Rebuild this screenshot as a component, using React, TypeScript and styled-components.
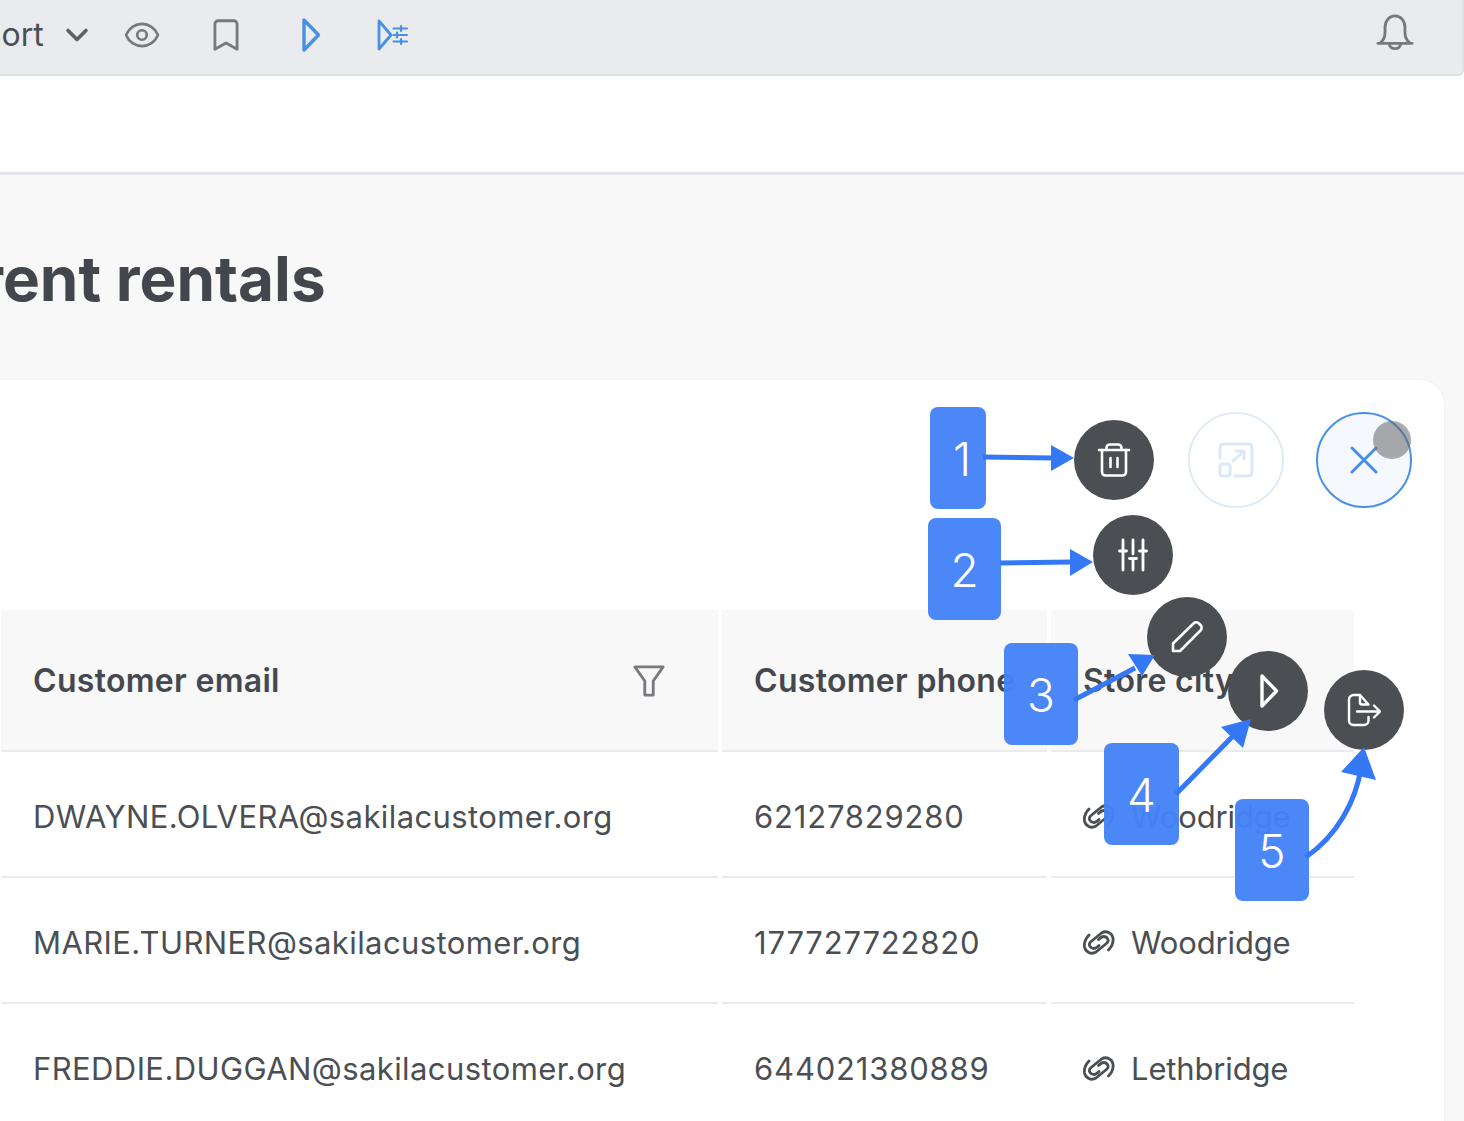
import React from "react";
import styled, { createGlobalStyle } from "styled-components";
import { Bookmark, ChevronDown, Eye } from "lucide-react";

const GlobalStyle = createGlobalStyle`
  html, body {
    margin: 0;
    padding: 0;
    background: #ffffff;
  }
  body {
    font-family: Inter, "Liberation Sans", sans-serif;
    color: #45494f;
  }
`;

const Page = styled("div")`
  position: relative;
  width: 1464px;
  height: 1121px;
  overflow: hidden;
  display: flex;
  flex-direction: column;
  background: #ffffff;
`;

const TopBar = styled("div")`
  height: 76px;
  box-sizing: border-box;
  display: flex;
  align-items: center;
  padding: 0 25px 5px 0;
  background: #e9ebef;
  border-bottom: 2px solid #dfe1e6;
  border-right: 2px solid #dfe1e6;
  border-bottom-right-radius: 6px;
`;

const SortLabel = styled("span")`
  margin-left: -19px;
  flex: 0 0 63px;
  font-size: 32px;
  line-height: 36px;
  color: #4b4f54;
`;

const Chevron = styled(ChevronDown)`
  flex: 0 0 36px;
  width: 36px;
  height: 36px;
  margin-left: 15px;
  margin-right: 5px;
  color: #5d6065;
`;

const IconSlot = styled("div")<{ $tone?: "grey" | "blue" }>`
  flex: 0 0 84px;
  height: 40px;
  display: flex;
  align-items: center;
  justify-content: center;
  color: ${(p) => (p.$tone === "blue" ? "#4a90e2" : "#77797d")};
`;

const BellSlot = styled(IconSlot)`
  box-sizing: border-box;
  margin-left: auto;
  padding-bottom: 5px;
`;

const SubBar = styled("div")`
  height: 96px;
  flex-shrink: 0;
  background: #ffffff;
  border-bottom: 3px solid #e4e6eb;
`;

const Content = styled("div")`
  flex: 1;
  min-height: 0;
  display: flex;
  flex-direction: column;
  background: #f8f8f9;
`;

const Title = styled("h1")`
  margin: 68px 0 0 -131px;
  font-size: 62px;
  line-height: 72px;
  font-weight: 700;
  color: #43474d;
  white-space: nowrap;
`;

const Card = styled("div")`
  flex: 1;
  margin: 65px 20px 0 -24px;
  padding: 230px 0 0 25px;
  background: #ffffff;
  border-radius: 24px 24px 0 0;
  box-shadow: 0 0 2px rgba(60, 64, 70, 0.1);
`;

const TableGrid = styled("div")`
  display: grid;
  grid-template-columns: 717px 325px 303px;
  column-gap: 4px;
`;

const HeadCell = styled("div")`
  height: 142px;
  box-sizing: border-box;
  display: flex;
  align-items: center;
  justify-content: space-between;
  padding: 1px 53px 0 32px;
  background: #f8f8f9;
  border-bottom: 2px solid #ebebef;
  font-size: 32px;
  font-weight: 600;
  letter-spacing: 0.3px;
  color: #45494f;
  white-space: nowrap;
`;

const BodyCell = styled("div")<{ $tracking: number }>`
  height: 126px;
  box-sizing: border-box;
  display: flex;
  align-items: center;
  gap: 16px;
  padding: 5px 0 0 32px;
  border-bottom: 2px solid #ebebef;
  font-size: 31px;
  letter-spacing: ${(p) => p.$tracking}px;
  color: #4b4f54;
  white-space: nowrap;
`;

const Marker = styled("div")<{ $x: number; $y: number; $w: number; $inset?: number }>`
  position: absolute;
  left: ${(p) => p.$x}px;
  top: ${(p) => p.$y}px;
  width: ${(p) => p.$w}px;
  height: 102px;
  box-sizing: border-box;
  padding: 2px 0 0 ${(p) => p.$inset ?? 0}px;
  display: flex;
  align-items: center;
  justify-content: center;
  border-radius: 8px;
  background: rgba(68, 130, 247, 0.96);
  color: #ffffff;
  font-size: 46px;
  font-weight: 300;
`;

const Fab = styled("div")<{ $x: number; $y: number }>`
  position: absolute;
  left: ${(p) => p.$x - 40}px;
  top: ${(p) => p.$y - 40}px;
  width: 80px;
  height: 80px;
  display: flex;
  align-items: center;
  justify-content: center;
  border-radius: 50%;
  background: #4b4f54;
  color: #ffffff;
`;

const RoundButton = styled("div")<{ $x: number; $active?: boolean }>`
  position: absolute;
  left: ${(p) => p.$x - 48}px;
  top: 412px;
  width: 96px;
  height: 96px;
  box-sizing: border-box;
  display: flex;
  align-items: center;
  justify-content: center;
  border-radius: 50%;
  border: 2px solid ${(p) => (p.$active ? "#4a90e2" : "#e0ebf8")};
  background: ${(p) => (p.$active ? "#f5f9fe" : "#ffffff")};
  color: ${(p) => (p.$active ? "#4a90e2" : "#dce8f8")};
`;

const TouchDot = styled("div")`
  position: absolute;
  left: 1373px;
  top: 421px;
  width: 38px;
  height: 38px;
  border-radius: 50%;
  background: rgba(100, 100, 102, 0.55);
`;

const ArrowLayer = styled("svg")`
  position: absolute;
  left: 0;
  top: 0;
  pointer-events: none;
`;

const BellIcon = () => (
  <svg width="38" height="36" viewBox="0 0 40 38" fill="none" stroke="currentColor" strokeWidth="3" strokeLinecap="round" strokeLinejoin="round">
    <path d="M5 30c3.500-3 4.500-6 4.500-11v-5C9.500 7 14 2 20 2s10.500 5 10.500 12v5c0 5 1 8 4.500 11" />
    <path d="M2 31h36" />
    <path d="M14 32c.8 3 3 4.500 6 4.500s5.200-1.500 6-4.500" />
  </svg>
);

const RunIcon = () => (
  <svg width="22" height="36" viewBox="0 0 22 36" fill="none" stroke="currentColor" strokeWidth="3.400" strokeLinejoin="round">
    <path d="M5 3 19.500 18 5 33Z" />
  </svg>
);

const RunSettingsIcon = () => (
  <svg width="34" height="34" viewBox="0 0 34 34" fill="none" stroke="currentColor" strokeWidth="2.800" strokeLinejoin="round" strokeLinecap="round">
    <path d="M2 3 14 17 2 31Z" />
    <path d="M16.500 10.500H30M16.500 17H30M16.500 23.500H30M24 8v5M20 14.500v5M24 21v5" strokeWidth="2.200" />
  </svg>
);

const FilterIcon = () => (
  <svg width="32" height="34" viewBox="0 0 34 36" fill="none" stroke="#77797d" strokeWidth="3" strokeLinejoin="round">
    <path d="M2 3h30L21.500 18v15h-9V18Z" />
  </svg>
);

const LinkIcon = () => (
  <svg width="32" height="27" viewBox="0 -1 32 27" fill="none" stroke="#4b4f54" strokeWidth="2.800" strokeLinecap="round" strokeLinejoin="round">
    <path d="M6 5C2 9 1 13 1.500 17c1 5 6.500 8 11.500 5l11-9c2.500-2.500.5-6.500-3.500-6.500-2 0-3.500 1.500-5 3" />
    <path d="M25.500 20c4-4 5-8 4.500-12-1-5-6.500-8-11.500-5l-11 9c-2.500 2.500-.5 6.500 3.500 6.500 2 0 3.500-1.500 5-3" />
  </svg>
);

const TrashIcon = () => (
  <svg width="34" height="36" viewBox="0 0 34 36" fill="none" stroke="currentColor" strokeWidth="2.600" strokeLinecap="round" strokeLinejoin="round">
    <path d="M2 8h30" />
    <path d="M9.500 8V6c0-2 1.500-3.500 3.500-3.500h8c2 0 3.500 1.500 3.500 3.500v2" />
    <path d="M5 8v22c0 2 1.500 3.500 3.500 3.500h17c2 0 3.500-1.500 3.500-3.500V8" />
    <path d="M13.500 16v9M20.500 16v9" />
  </svg>
);

const SlidersIcon = () => (
  <svg width="30" height="34" viewBox="0 0 30 34" fill="none" stroke="currentColor" strokeWidth="2.800" strokeLinecap="round">
    <path d="M5 2v30M15 2v14M15 21v11M25 2v30" />
    <path d="M1.500 13h7M11.500 20.500h7M21.500 13h7" />
  </svg>
);

const PencilIcon = () => (
  <svg width="34" height="34" viewBox="0 0 34 34" fill="none" stroke="currentColor" strokeWidth="2.600" strokeLinejoin="round">
    <path d="M3 23.500 23.500 3.500c1.500-1.500 4-1.500 5.500 0l1.500 1.500c1.500 1.500 1.500 4 0 5.500L10 31H3Z" />
  </svg>
);

const ExportIcon = () => (
  <svg width="34" height="34" viewBox="0 0 34 34" fill="none" stroke="currentColor" strokeWidth="2.400" strokeLinecap="round" strokeLinejoin="round">
    <path d="M13 2H6.500C4 2 2 4 2 6.500v21C2 30 4 32 6.500 32H17c2.500 0 4.500-2 4.500-4.500V24" />
    <path d="M13 2l8.500 9.500H15c-1.200 0-2-.8-2-2Z" />
    <path d="M10 18.500h23M27 12.500l6 6-6 6" />
  </svg>
);

const ExpandIcon = () => (
  <svg width="36" height="36" viewBox="0 0 36 36" fill="none" stroke="currentColor" strokeWidth="3" strokeLinecap="round" strokeLinejoin="round">
    <path d="M2 16V5.500C2 3.500 3.500 2 5.500 2h25C32.500 2 34 3.500 34 5.500v25c0 2-1.500 3.500-3.500 3.500H17" />
    <rect x="2" y="22" width="10" height="12" rx="2.500" />
    <path d="M15 19 26 9M18 9h8v8" />
  </svg>
);

const CloseIcon = () => (
  <svg width="28" height="28" viewBox="0 0 28 28" fill="none" stroke="currentColor" strokeWidth="3" strokeLinecap="round">
    <path d="M2 2l24 24M26 2 2 26" />
  </svg>
);

const rows = [
  { email: "DWAYNE.OLVERA@sakilacustomer.org", phone: "62127829280", city: "Woodridge" },
  { email: "MARIE.TURNER@sakilacustomer.org", phone: "177727722820", city: "Woodridge" },
  { email: "FREDDIE.DUGGAN@sakilacustomer.org", phone: "644021380889", city: "Lethbridge" },
];

const App: React.FC = () => {
  return (
    <>
      <GlobalStyle />
      <Page>
        <TopBar>
          <SortLabel>Sort</SortLabel>
          <Chevron strokeWidth={2.4} />
          <IconSlot>
            <Eye size={38} strokeWidth={1.7} />
          </IconSlot>
          <IconSlot>
            <Bookmark size={38} strokeWidth={1.8} />
          </IconSlot>
          <IconSlot $tone="blue">
            <RunIcon />
          </IconSlot>
          <IconSlot $tone="blue">
            <RunSettingsIcon />
          </IconSlot>
          <BellSlot>
            <BellIcon />
          </BellSlot>
        </TopBar>
        <SubBar />
        <Content>
          <Title>Current rentals</Title>
          <Card>
            <TableGrid>
              <HeadCell>
                Customer email
                <FilterIcon />
              </HeadCell>
              <HeadCell>Customer phone</HeadCell>
              <HeadCell>Store city</HeadCell>
              {rows.map((row) => (
                <React.Fragment key={row.email}>
                  <BodyCell $tracking={0.4}>{row.email}</BodyCell>
                  <BodyCell $tracking={0.82}>{row.phone}</BodyCell>
                  <BodyCell $tracking={-0.15}>
                    <LinkIcon />
                    {row.city}
                  </BodyCell>
                </React.Fragment>
              ))}
            </TableGrid>
          </Card>
        </Content>

        <RoundButton $x={1236}>
          <ExpandIcon />
        </RoundButton>
        <RoundButton $x={1364} $active>
          <CloseIcon />
        </RoundButton>
        <TouchDot />

        <Fab $x={1114} $y={460}>
          <TrashIcon />
        </Fab>
        <Fab $x={1133} $y={555}>
          <SlidersIcon />
        </Fab>
        <Fab $x={1187} $y={637}>
          <PencilIcon />
        </Fab>
        <Fab $x={1268} $y={691}>
          <RunIcon />
        </Fab>
        <Fab $x={1364} $y={710}>
          <ExportIcon />
        </Fab>

        <Marker $x={930} $y={407} $w={56} $inset={8}>1</Marker>
        <Marker $x={928} $y={518} $w={73}>2</Marker>
        <Marker $x={1004} $y={643} $w={74}>3</Marker>
        <Marker $x={1104} $y={743} $w={75}>4</Marker>
        <Marker $x={1235} $y={799} $w={74}>5</Marker>

        <ArrowLayer width="1464" height="1121" viewBox="0 0 1464 1121" fill="none">
          <g stroke="#3478f6" strokeWidth="5">
            <path d="M983 457 1054 458" />
            <path d="M1000 563 1072 562" />
            <path d="M1074 700 1135 668" />
            <path d="M1176 794 1234 735" />
            <path d="M1306 857C1338 835 1356 800 1361 768" />
          </g>
          <g fill="#3478f6">
            <path d="M1051 445 1074 458 1051 471Z" />
            <path d="M1070 549 1093 562 1070 576Z" />
            <path d="M1128 654 1155 655 1142 676Z" />
            <path d="M1221 727 1251 719 1243 748Z" />
            <path d="M1341 772 1376 780 1364 747Z" />
          </g>
        </ArrowLayer>
      </Page>
    </>
  );
};

export default App;
